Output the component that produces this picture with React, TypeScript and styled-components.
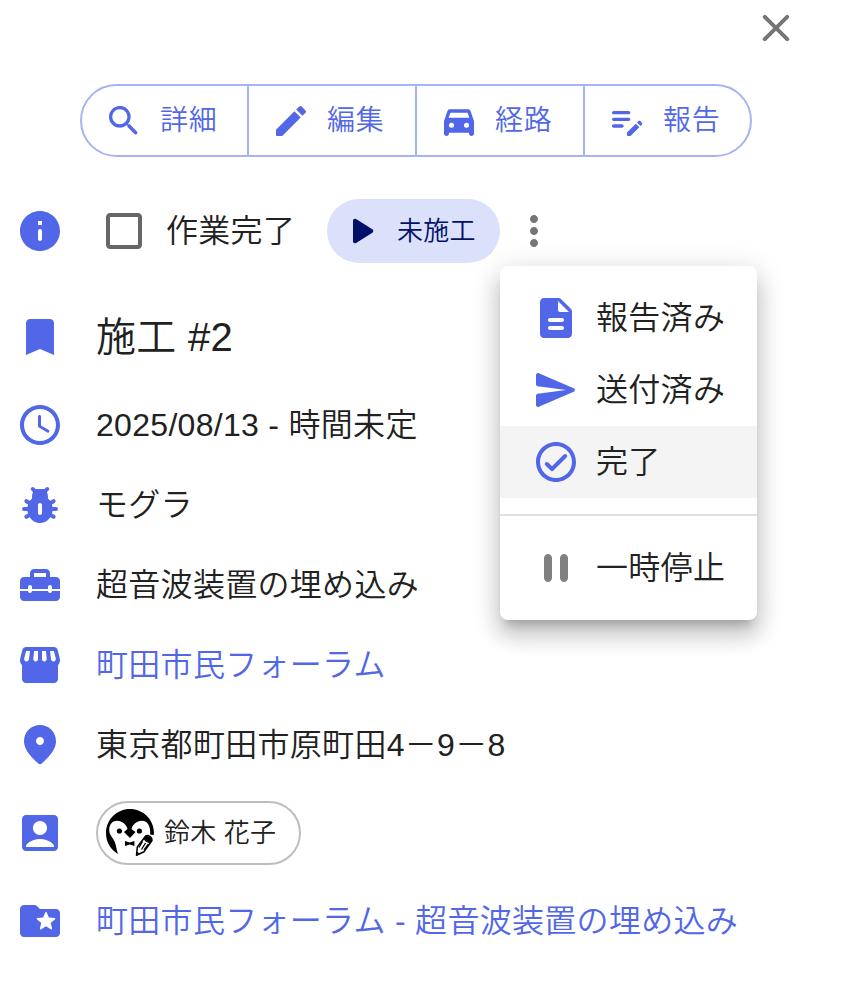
import React from 'react';
import styled, { createGlobalStyle } from 'styled-components';

const PRIMARY = '#5267e8';
const INK = '#212121';
const MUTED = '#757575';

const GlobalStyle = createGlobalStyle`
  *, *::before, *::after { box-sizing: border-box; }
  body {
    margin: 0;
    background: #fff;
    color: ${INK};
    font-family: 'Liberation Sans', 'Noto Sans CJK JP', sans-serif;
    font-weight: 350;
  }
  button { font: inherit; }
`;

const paths = {
  close:
    'M18.3 5.71a.996.996 0 0 0-1.41 0L12 10.59 7.11 5.7A.996.996 0 1 0 5.7 7.11L10.59 12 5.7 16.89a.996.996 0 1 0 1.41 1.41L12 13.41l4.89 4.89a.996.996 0 1 0 1.41-1.41L13.41 12l4.89-4.89c.38-.38.38-1.02 0-1.4z',
  search:
    'M15.5 14h-.79l-.28-.27c1.2-1.4 1.82-3.31 1.48-5.34-.47-2.78-2.79-5-5.59-5.34-4.23-.52-7.79 3.04-7.27 7.27.34 2.8 2.56 5.12 5.34 5.59 2.03.34 3.94-.28 5.34-1.48l.27.28v.79l4.25 4.25c.41.41 1.08.41 1.49 0 .41-.41.41-1.08 0-1.49L15.5 14zm-6 0C7.01 14 5 11.99 5 9.5S7.01 5 9.5 5 14 7.01 14 9.5 11.99 14 9.5 14z',
  edit:
    'M3 17.46v3.04c0 .28.22.5.5.5h3.04c.13 0 .26-.05.35-.15L17.81 9.94l-3.75-3.75L3.15 17.1c-.1.1-.15.22-.15.36zM20.71 7.04c.39-.39.39-1.02 0-1.41l-2.34-2.34a.996.996 0 0 0-1.41 0l-1.83 1.83 3.75 3.75 1.83-1.83z',
  car:
    'M18.92 6.01C18.72 5.42 18.16 5 17.5 5h-11c-.66 0-1.21.42-1.42 1.01L3 12v7.5c0 .82.67 1.5 1.5 1.5S6 20.33 6 19.5V19h12v.5c0 .82.67 1.5 1.5 1.5s1.5-.67 1.5-1.5V12l-2.08-5.99zM6.85 7h10.29l1.08 3.11H5.77L6.85 7zM7.5 16a1.5 1.5 0 1 1 0-3 1.5 1.5 0 0 1 0 3zm9 0a1.5 1.5 0 1 1 0-3 1.5 1.5 0 0 1 0 3z',
  editNote:
    'M3 11c0-.55.45-1 1-1h9c.55 0 1 .45 1 1s-.45 1-1 1H4c-.55 0-1-.45-1-1zm0-4c0 .55.45 1 1 1h9c.55 0 1-.45 1-1s-.45-1-1-1H4c-.55 0-1 .45-1 1zm7 8c0-.55-.45-1-1-1H4c-.55 0-1 .45-1 1s.45 1 1 1h5c.55 0 1-.45 1-1zm8.01-2.13.71-.71c.39-.39 1.02-.39 1.41 0l.71.71c.39.39.39 1.02 0 1.41l-.71.71-2.12-2.12zm-.71.71-5.16 5.16c-.09.09-.14.21-.14.35v1.41c0 .28.22.5.5.5h1.41c.13 0 .26-.05.35-.15l5.16-5.16-2.12-2.11z',
  info:
    'M12 2C6.48 2 2 6.48 2 12s4.48 10 10 10 10-4.48 10-10S17.52 2 12 2zm0 15c-.55 0-1-.45-1-1v-4c0-.55.45-1 1-1s1 .45 1 1v4c0 .55-.45 1-1 1zm1-8h-2V7h2v2z',
  checkbox:
    'M19 5v14H5V5h14m0-2H5c-1.1 0-2 .9-2 2v14c0 1.1.9 2 2 2h14c1.1 0 2-.9 2-2V5c0-1.1-.9-2-2-2z',
  bookmark: 'M17 3H7c-1.1 0-2 .9-2 2v16l7-3 7 3V5c0-1.1-.9-2-2-2z',
  schedule:
    'M11.99 2C6.47 2 2 6.48 2 12s4.47 10 9.99 10C17.52 22 22 17.52 22 12S17.52 2 11.99 2zM12 20c-4.42 0-8-3.58-8-8s3.58-8 8-8 8 3.58 8 8-3.58 8-8 8zm-.22-13h-.06c-.4 0-.72.32-.72.72v4.72c0 .35.18.68.49.86l4.15 2.49c.34.2.78.1.98-.24.21-.34.1-.79-.25-.99l-3.87-2.3V7.72c0-.4-.32-.72-.72-.72z',
  toolbox:
    'M20 8h-3V6c0-1.1-.9-2-2-2H9c-1.1 0-2 .9-2 2v2H4c-1.1 0-2 .9-2 2v4h4v-1c0-.55.45-1 1-1s1 .45 1 1v1h8v-1c0-.55.45-1 1-1s1 .45 1 1v1h4v-4c0-1.1-.9-2-2-2zM15 8H9V6h6v2zM18 15c0 .55-.45 1-1 1s-1-.45-1-1H8c0 .55-.45 1-1 1s-1-.45-1-1H2v3c0 1.1.9 2 2 2h16c1.1 0 2-.9 2-2v-3h-4z',
  store:
    'M21.9 8.89l-1.05-4.37c-.22-.9-1-1.52-1.91-1.52H5.05c-.9 0-1.69.63-1.9 1.52L2.1 8.89c-.24 1.02-.02 2.06.62 2.88.08.11.19.19.28.29V19c0 1.1.9 2 2 2h14c1.1 0 2-.9 2-2v-6.94c.09-.09.2-.18.28-.28.64-.82.87-1.87.62-2.89zM5.06 5H7l-.5 4c-.08.7-.6 1.2-1.2 1.2-.8 0-1.4-.75-1.2-1.5L5.06 5zM9.05 5H11v4.1c0 .6-.5 1.1-1.15 1.1-.75 0-1.3-.6-1.2-1.3L9.05 5zM13 5h1.95l.4 3.9c.1.7-.45 1.3-1.2 1.3-.65 0-1.15-.5-1.15-1.1V5zM17 5h1.94l.96 3.7c.2.75-.4 1.5-1.2 1.5-.6 0-1.12-.5-1.2-1.2L17 5z',
  place:
    'M12 2C7.8 2 4 5.22 4 10.2c0 3.18 2.45 6.92 7.34 11.23.38.33.95.33 1.33 0C17.55 17.12 20 13.38 20 10.2 20 5.22 16.2 2 12 2zm0 10c-1.1 0-2-.9-2-2s.9-2 2-2 2 .9 2 2-.9 2-2 2z',
  account:
    'M19 3H5c-1.1 0-2 .9-2 2v14c0 1.1.9 2 2 2h14c1.1 0 2-.9 2-2V5c0-1.1-.9-2-2-2zm-7 3c1.93 0 3.5 1.57 3.5 3.5S13.93 13 12 13s-3.5-1.57-3.5-3.5S10.07 6 12 6zm7 13H5v-.23c0-.62.28-1.2.76-1.58C7.47 15.82 9.64 15 12 15s4.53.82 6.24 2.19c.48.38.76.97.76 1.58V19z',
  folder:
    'M20 6h-8l-1.41-1.41C10.21 4.21 9.7 4 9.17 4H4c-1.1 0-2 .9-2 2v12c0 1.1.9 2 2 2h16c1.1 0 2-.9 2-2V8c0-1.1-.9-2-2-2zm-2.42 10.2L15 14.68l-2.58 1.52c-.3.15-.55-.05-.48-.4l.7-2.83-2.2-1.87c-.25-.22-.13-.58.2-.6l2.9-.26 1.14-2.6c.14-.32.5-.32.64 0l1.14 2.6 2.9.26c.33.02.45.38.2.6l-2.2 1.87.7 2.83c.07.35-.18.55-.48.4z',
  play: 'M8 6.82v10.36c0 .79.87 1.27 1.54.84l8.14-5.18c.62-.39.62-1.29 0-1.69L9.54 5.98C8.87 5.55 8 6.03 8 6.82z',
  more:
    'M12 8c1.1 0 2-.9 2-2s-.9-2-2-2-2 .9-2 2 .9 2 2 2zm0 2c-1.1 0-2 .9-2 2s.9 2 2 2 2-.9 2-2-.9-2-2-2zm0 6c-1.1 0-2 .9-2 2s.9 2 2 2 2-.9 2-2-.9-2-2-2z',
  description:
    'M14.59 2.59c-.38-.38-.89-.59-1.42-.59H6c-1.1 0-2 .9-2 2v16c0 1.1.89 2 1.99 2H18c1.1 0 2-.9 2-2V8.83c0-.53-.21-1.04-.59-1.41l-4.82-4.83zM15 18H9c-.55 0-1-.45-1-1s.45-1 1-1h6c.55 0 1 .45 1 1s-.45 1-1 1zm0-4H9c-.55 0-1-.45-1-1s.45-1 1-1h6c.55 0 1 .45 1 1s-.45 1-1 1zm-2-6V3.5L18.5 9H14c-.55 0-1-.45-1-1z',
  send:
    'M3.4 20.4l17.45-7.48c.81-.35.81-1.49 0-1.84L3.4 3.6c-.66-.29-1.39.2-1.39.91L2 9.12c0 .5.37.93.87.99L17 12 2.87 13.88c-.5.07-.87.5-.87 1l.01 4.61c0 .71.73 1.2 1.39.91z',
  checkCircle:
    'M12 2C6.48 2 2 6.48 2 12s4.48 10 10 10 10-4.48 10-10S17.52 2 12 2zm0 18c-4.41 0-8-3.59-8-8s3.59-8 8-8 8 3.59 8 8-3.59 8-8 8zm3.88-11.71L10 14.17l-1.88-1.88a.996.996 0 1 0-1.41 1.41l2.59 2.59c.39.39 1.02.39 1.41 0L17.3 9.7a.996.996 0 0 0 0-1.41c-.39-.39-1.03-.39-1.42 0z',
  pause:
    'M8 19c1.1 0 2-.9 2-2V7c0-1.1-.9-2-2-2s-2 .9-2 2v10c0 1.1.9 2 2 2zm6-12v10c0 1.1.9 2 2 2s2-.9 2-2V7c0-1.1-.9-2-2-2s-2 .9-2 2z',
};

type IconName = keyof typeof paths;

const Svg = styled.svg<{ $size?: number; $color?: string }>`
  display: block;
  flex: none;
  width: ${(p) => p.$size ?? 48}px;
  height: ${(p) => p.$size ?? 48}px;
  color: ${(p) => p.$color ?? PRIMARY};
  fill: currentColor;
`;

const Icon = ({ name, size, color }: { name: IconName; size?: number; color?: string }) => (
  <Svg viewBox="0 0 24 24" $size={size} $color={color} aria-hidden>
    <path fillRule="evenodd" d={paths[name]} />
  </Svg>
);

const BugIcon = () => (
  <Svg viewBox="0 0 24 24" aria-hidden>
    <path
      fillRule="evenodd"
      d="M8 8c0-2.4 1.300-4 2.500-4h3c1.200 0 2.500 1.600 2.500 4v.8c1.400 1.200 2.300 3.100 2.300 5.200 0 4-2.800 7-6.300 7s-6.300-3-6.300-7c0-2.100.9-4 2.300-5.200V8zM12 11c-.55 0-1 .45-1 1v4c0 .55.45 1 1 1s1-.45 1-1v-4c0-.55-.45-1-1-1z"
    />
    <g fill="none" stroke="currentColor" strokeWidth="2" strokeLinecap="round">
      <path d="M8.400 4 10 5.700M15.600 4 14 5.700M5.200 10.100 8 11.700M18.800 10.100 16 11.700M4 14h4M20 14h-4M5.200 17.900 8 16.300M18.800 17.900 16 16.300" />
    </g>
  </Svg>
);

const AvatarSvg = styled.svg`
  display: block;
  flex: none;
  width: 48px;
  height: 48px;
`;

const PenguinAvatar = () => (
  <AvatarSvg viewBox="0 0 48 48" role="img" aria-label="avatar">
    {/* hood */}
    <path d="M12 45C4.800 41 0 33.500 0 24 0 10.700 10.700 0 24 0s24 10.700 24 24l-.3 2-3.500-.5c.6-7.500-2.400-13.700-8.200-13.700-5.600 0-9.300 3.700-10.500 8.200l4 3L24 29l-6-6 3.500-3C20.300 15.500 16.600 11.800 11 11.800c-5 0-7.800 4.200-7.800 9.200C3.200 26 7 28.500 8.800 33c1.500 4 1.700 8 3.200 12z" />
    <circle cx="13.400" cy="22" r="2.600" />
    <circle cx="33.400" cy="22" r="2.600" />
    {/* bow tie */}
    <path d="M19 32l4.700 1.500 4.700-1.500v5l-4.700-1.500L19 37z" />
    {/* pencil */}
    <path
      fill="#fff"
      stroke="#000"
      strokeWidth="1.500"
      strokeLinejoin="round"
      d="M30.500 46.300 31.300 38 39.500 27.200c2.500-2 7 1.300 6.500 4.300L38 42.800z"
    />
    <path fill="none" stroke="#000" strokeWidth="1.300" d="M38 29.200c1.500 2.800 4 4.500 7 4.200M36.500 32.500 33 38.500M39.500 34 35.500 40.500M42.500 35 38 41" />
    <path d="M38.800 27.800c2-2.200 7.500.8 7 4l-1.200 1.400c-2.500 0-5.300-1.800-6.500-4.200z" />
    <path d="M30.700 42.500l2.800 2-3.300 2.300z" />
  </AvatarSvg>
);

const Panel = styled.main`
  position: relative;
  display: flex;
  flex-direction: column;
  width: 842px;
  height: 982px;
  overflow: hidden;
  background: #fff;
`;

const PanelHeader = styled.header`
  display: flex;
  justify-content: flex-end;
  height: 84px;
  padding: 4px 42px 0 0;
`;

const IconButton = styled.button`
  display: flex;
  height: 48px;
  padding: 0;
  border: 0;
  background: none;
`;

const ButtonGroup = styled.div`
  display: grid;
  grid-template-columns: 167px 168px 168px 165px;
  width: 672px;
  height: 73px;
  margin: 0 0 16px 80px;
  border: 2px solid #a8b3f4;
  border-radius: 37px;
`;

const GroupButton = styled.button`
  display: flex;
  align-items: center;
  gap: 16px;
  padding: 0 0 0 22px;
  border: 0;
  background: none;
  color: ${PRIMARY};
  font-size: 28px;
  letter-spacing: 0.8px;
  line-height: 40px;
  white-space: nowrap;

  &:not(:last-child) {
    border-right: 2px solid #a8b3f4;
  }
`;

const Row = styled.div<{ $height?: number }>`
  display: grid;
  grid-template-columns: 48px 1fr;
  column-gap: 32px;
  align-items: center;
  height: ${(p) => p.$height ?? 80}px;
  padding-left: 16px;
`;

const Text = styled.span<{ $size?: number; $color?: string }>`
  color: ${(p) => p.$color ?? INK};
  font-size: ${(p) => p.$size ?? 32}px;
  letter-spacing: 0.3px;
  line-height: 48px;
  white-space: nowrap;
`;

const LinkText = styled(Text).attrs({ as: 'a' })`
  color: ${PRIMARY};
  text-decoration: none;
`;

const StatusLine = styled.div`
  display: flex;
  align-items: center;
  padding-left: 4px;
`;

const CheckLabel = styled.label`
  display: flex;
  align-items: center;
  gap: 18px;
  width: 227px;
`;

const StatusChip = styled.div`
  display: flex;
  align-items: center;
  gap: 12px;
  width: 173px;
  height: 64px;
  margin-right: 10px;
  padding-left: 10px;
  border-radius: 32px;
  background: #dce1fb;
  color: #00106b;
  font-size: 26px;
  letter-spacing: 0.2px;
  line-height: 40px;
`;

const PersonChip = styled.div`
  display: flex;
  align-items: center;
  gap: 10px;
  width: 205px;
  height: 64px;
  padding-left: 8px;
  border: 2px solid #bdbdbd;
  border-radius: 32px;
  font-size: 26px;
  letter-spacing: 0.2px;
  line-height: 40px;
  white-space: nowrap;
`;

const Menu = styled.ul`
  position: absolute;
  top: 266px;
  left: 500px;
  width: 257px;
  margin: 0;
  padding: 16px 0;
  border-radius: 8px;
  background: #fff;
  box-shadow:
    0 10px 10px -6px rgba(0, 0, 0, 0.2),
    0 16px 20px 2px rgba(0, 0, 0, 0.14),
    0 6px 28px 4px rgba(0, 0, 0, 0.12);
  list-style: none;
`;

const MenuItem = styled.li<{ $active?: boolean }>`
  display: flex;
  align-items: center;
  gap: 16px;
  height: 72px;
  padding-left: 32px;
  background: ${(p) => (p.$active ? '#f4f4f4' : 'transparent')};
`;

const Divider = styled.li`
  height: 2px;
  margin: 16px 0;
  background: #e0e0e0;
`;

const actions: { icon: IconName; label: string }[] = [
  { icon: 'search', label: '詳細' },
  { icon: 'edit', label: '編集' },
  { icon: 'car', label: '経路' },
  { icon: 'editNote', label: '報告' },
];

const menuItems: { icon: IconName; label: string; active?: boolean }[] = [
  { icon: 'description', label: '報告済み' },
  { icon: 'send', label: '送付済み' },
  { icon: 'checkCircle', label: '完了', active: true },
];

export default function App() {
  return (
    <>
      <GlobalStyle />
      <Panel>
        <PanelHeader>
          <IconButton aria-label="close">
            <Icon name="close" color={MUTED} />
          </IconButton>
        </PanelHeader>

        <ButtonGroup>
          {actions.map((a) => (
            <GroupButton key={a.label}>
              <Icon name={a.icon} size={40} />
              <span>{a.label}</span>
            </GroupButton>
          ))}
        </ButtonGroup>

        <Row $height={116}>
          <Icon name="info" />
          <StatusLine>
            <CheckLabel>
              <Icon name="checkbox" color="#666" />
              <Text>作業完了</Text>
            </CheckLabel>
            <StatusChip>
              <Icon name="play" color="#00106b" />
              <span>未施工</span>
            </StatusChip>
            <IconButton aria-label="more">
              <Icon name="more" color={MUTED} />
            </IconButton>
          </StatusLine>
        </Row>
        <Row $height={96}>
          <Icon name="bookmark" />
          <Text $size={40}>施工 #2</Text>
        </Row>
        <Row>
          <Icon name="schedule" />
          <Text>2025/08/13 - 時間未定</Text>
        </Row>
        <Row>
          <BugIcon />
          <Text>モグラ</Text>
        </Row>
        <Row>
          <Icon name="toolbox" />
          <Text>超音波装置の埋め込み</Text>
        </Row>
        <Row>
          <Icon name="store" />
          <LinkText>町田市民フォーラム</LinkText>
        </Row>
        <Row>
          <Icon name="place" />
          <Text>東京都町田市原町田4－9－8</Text>
        </Row>
        <Row $height={96}>
          <Icon name="account" />
          <PersonChip>
            <PenguinAvatar />
            <span>鈴木 花子</span>
          </PersonChip>
        </Row>
        <Row>
          <Icon name="folder" />
          <LinkText>町田市民フォーラム - 超音波装置の埋め込み</LinkText>
        </Row>

        <Menu>
          {menuItems.map((m) => (
            <MenuItem key={m.label} $active={m.active}>
              <Icon name={m.icon} />
              <Text>{m.label}</Text>
            </MenuItem>
          ))}
          <Divider />
          <MenuItem>
            <Icon name="pause" color="#808080" />
            <Text>一時停止</Text>
          </MenuItem>
        </Menu>
      </Panel>
    </>
  );
}
